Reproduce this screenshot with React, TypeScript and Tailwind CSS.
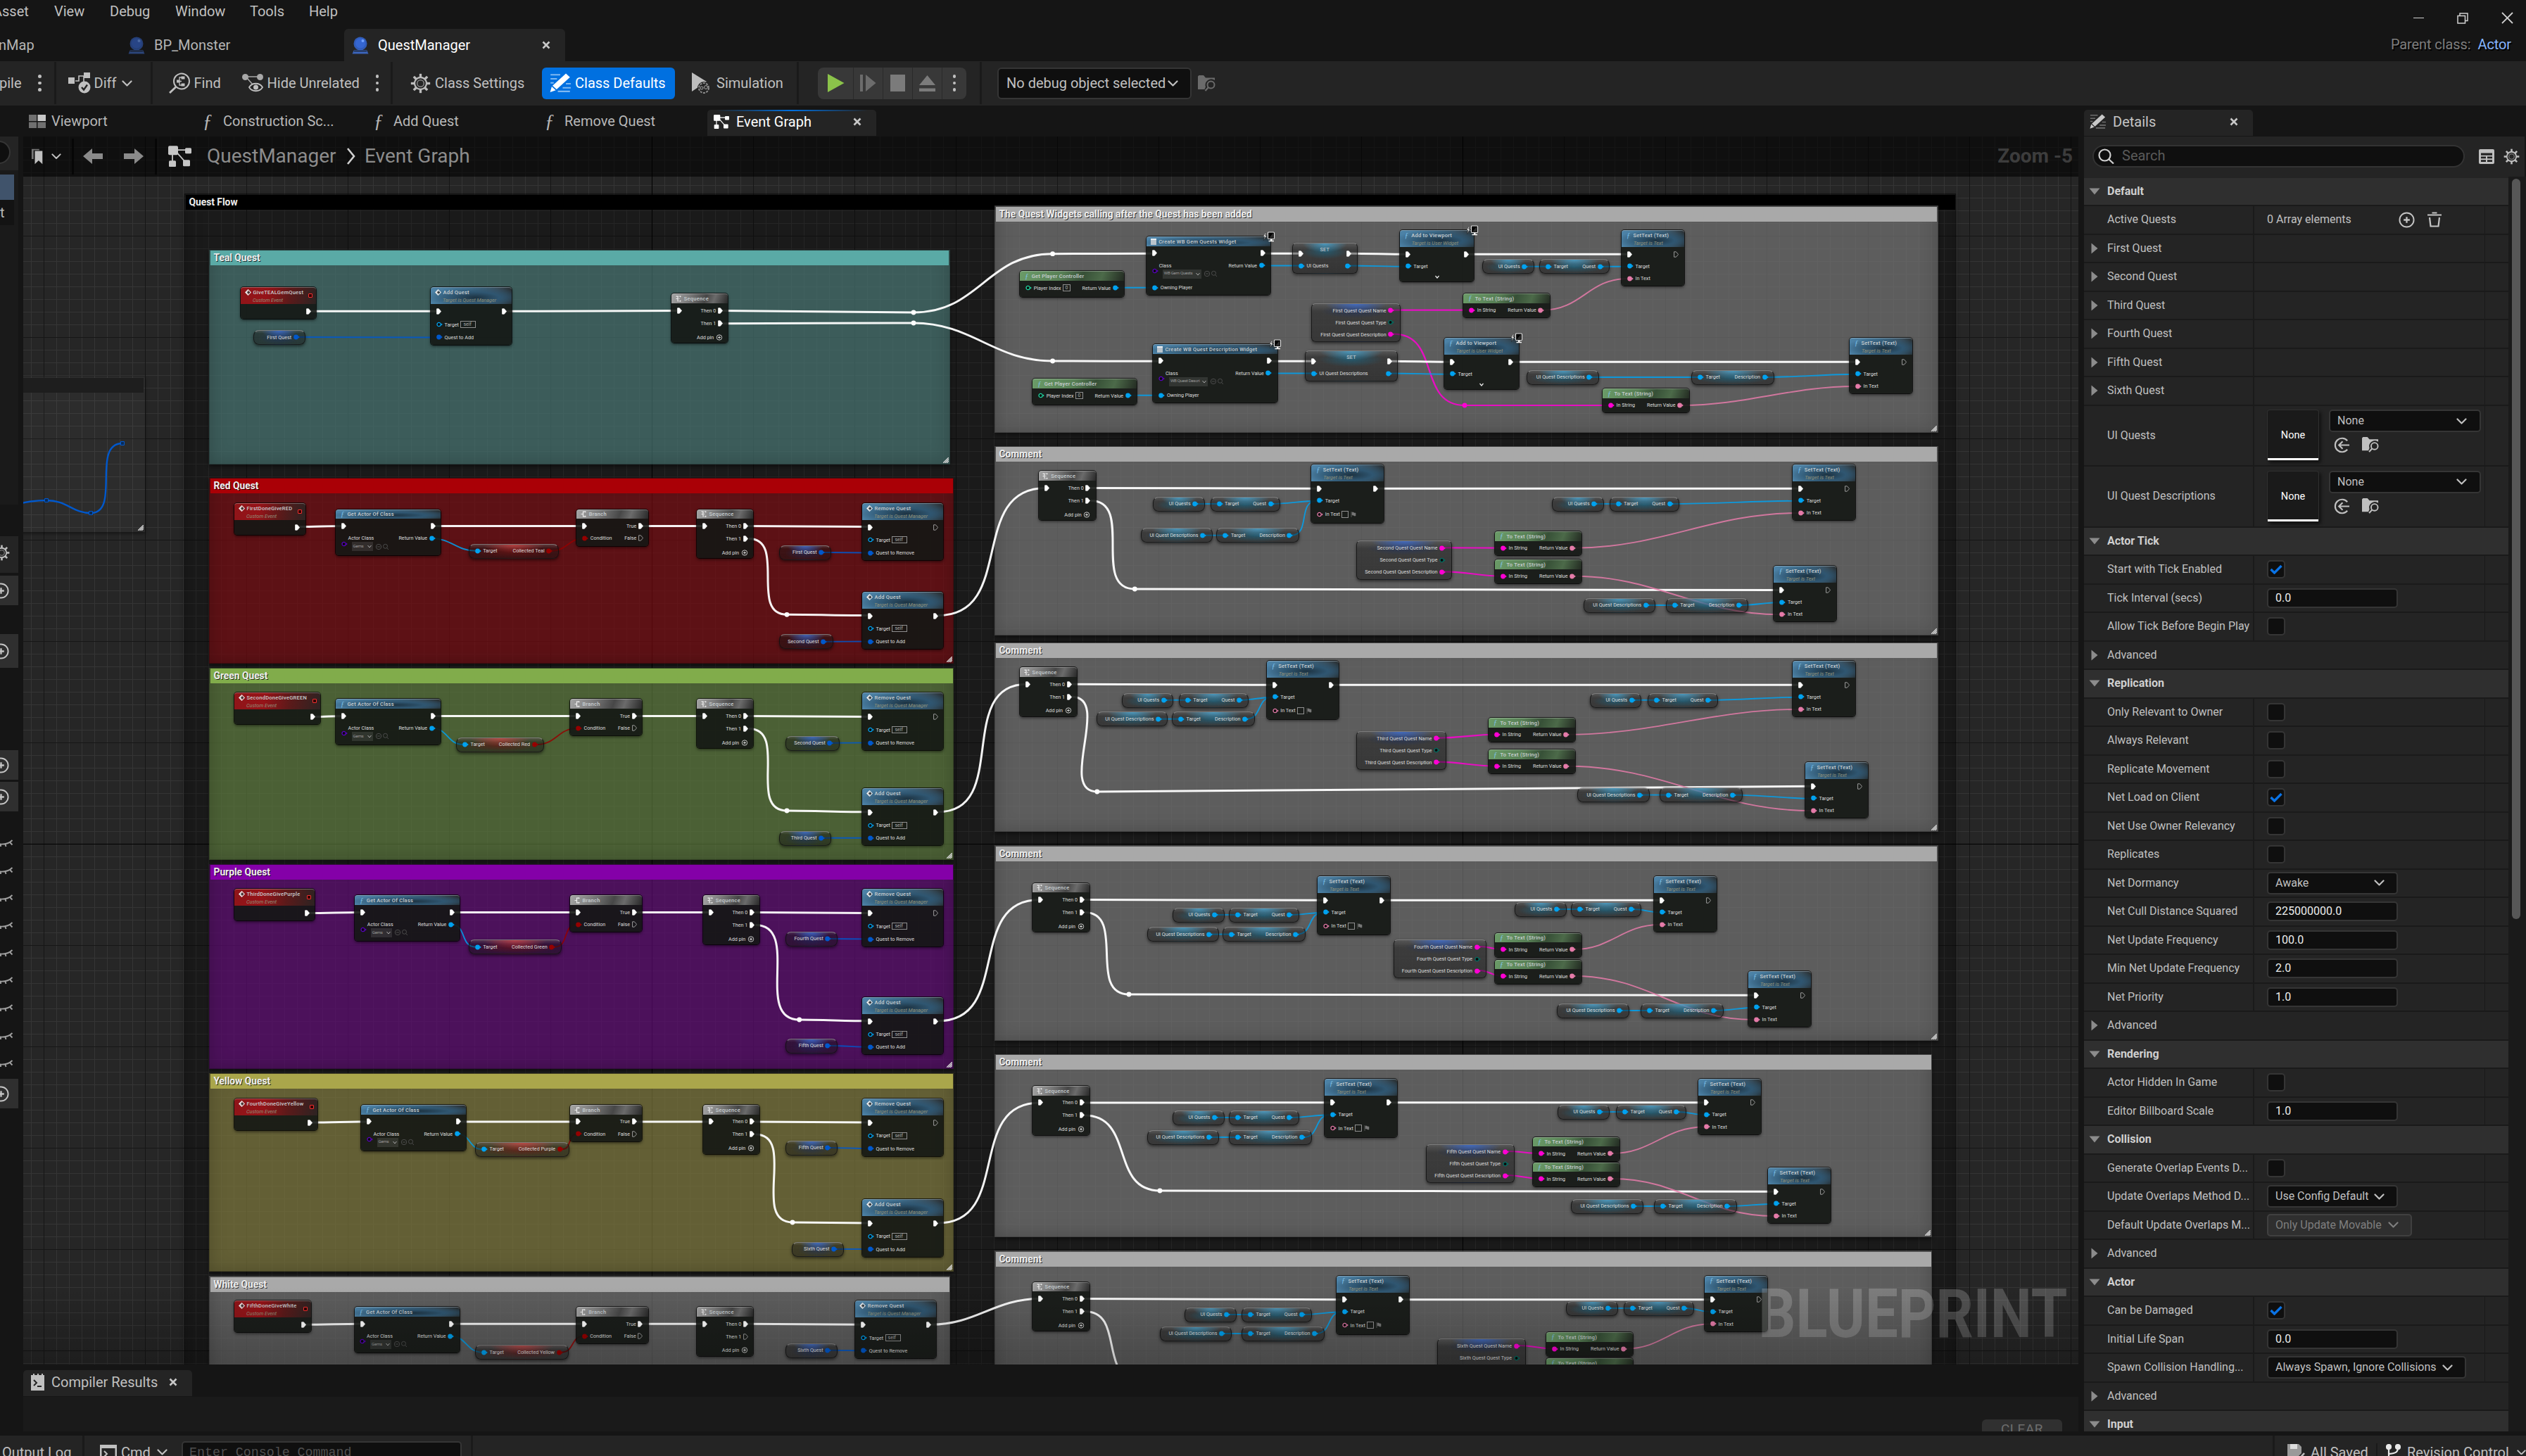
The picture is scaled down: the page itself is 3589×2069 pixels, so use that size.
import React from "react";

/* ------------------------------------------------------------------ */
/* Blueprint graph data                                                */
/* ------------------------------------------------------------------ */

type Kind = "exec" | "obj" | "struct" | "str" | "text" | "enum" | "bool" | "cls" | "int";
type Pin = { k?: Kind; t?: string; hollow?: boolean; box?: string; flag?: boolean; plus?: boolean };
type Row = { h?: number; l?: Pin; r?: Pin };
type Tone = "event" | "func" | "pure" | "flow";
type GNode = {
  x: number;
  y: number;
  w: number;
  h: number;
  tone?: Tone;
  icon?: "event" | "f" | "branch" | "seq" | "widget";
  title?: string;
  sub?: string;
  rows: Row[];
  pill?: "obj" | "struct" | "bool" | "set";
  latent?: boolean;
  expand?: boolean;
  pick?: { label: string; value: string; boxW: number };
};
type Wire = { a: [number, number]; b: [number, number]; k: Kind };

const COLORS: Record<Kind, string> = {
  exec: "#ffffff",
  obj: "#00a2f0",
  struct: "#0058cc",
  str: "#ff00d4",
  text: "#e57ba9",
  enum: "#006e62",
  bool: "#950000",
  cls: "#5a00c0",
  int: "#1fd6a0",
};

const nodes: GNode[] = [];
const wires: Wire[] = [];
const knots: { p: [number, number]; k: Kind }[] = [];
const link = (k: Kind, ...pts: [number, number][]) => {
  for (let i = 0; i < pts.length - 1; i++) wires.push({ a: pts[i], b: pts[i + 1], k });
  for (let i = 1; i < pts.length - 1; i++) knots.push({ p: pts[i], k });
};

const X: Pin = { k: "exec" };
const XH: Pin = { k: "exec", hollow: true };

function eventNode(x: number, y: number, w: number, title: string) {
  nodes.push({ x, y, w, h: 45, tone: "event", icon: "event", title, sub: "Custom Event", rows: [{ r: X, h: 18.3 }] });
}
function questNode(x: number, y: number, verb: "Add" | "Remove", open = false) {
  nodes.push({
    x, y, w: 115, h: 81.5, tone: "func", icon: "event", title: `${verb} Quest`, sub: "Target is Quest Manager",
    rows: [
      { h: 18.3, l: X, r: open ? XH : X },
      { h: 18.3, l: { k: "obj", hollow: true, t: "Target", box: "self" } },
      { h: 18.3, l: { k: "struct", t: `Quest to ${verb}` } },
    ],
  });
}
function seqNode(x: number, y: number, w = 80, last = true) {
  nodes.push({
    x, y, w, h: 69.5, tone: "flow", icon: "seq", title: "Sequence",
    rows: [
      { l: X, r: { k: "exec", t: "Then 0" } },
      { h: 18.6, r: { k: "exec", t: "Then 1", hollow: !last } },
      { h: 21, r: { t: "Add pin", plus: true } },
    ],
  });
}
function branchNode(x: number, y: number) {
  nodes.push({
    x, y, w: 102, h: 52, tone: "flow", icon: "branch", title: "Branch",
    rows: [
      { l: X, r: { k: "exec", t: "True" } },
      { l: { k: "bool", t: "Condition" }, r: { k: "exec", hollow: true, t: "False" } },
    ],
  });
}
function actorNode(x: number, y: number) {
  nodes.push({
    x, y, w: 149, h: 65, tone: "func", icon: "f", title: "Get Actor Of Class",
    rows: [{ l: X, r: X }, { l: { t: "Actor Class" }, r: { k: "obj", t: "Return Value" } }],
    pick: { label: "Actor Class", value: "Gems", boxW: 30 },
  });
}
function varNode(x: number, cy: number, w: number, t: string, pill: "obj" | "struct") {
  nodes.push({ x, y: cy - 10.3, w, h: 21, pill, rows: [{ h: 20.6, r: { k: pill, t } }] });
}
function getNode(x: number, cy: number, w: number, t: string, k: "obj" | "bool") {
  nodes.push({ x, y: cy - 10.3, w, h: 21, pill: k, rows: [{ h: 20.6, l: { k: "obj", t: "Target" }, r: { k, t } }] });
}
function setText(x: number, y: number, first = false) {
  nodes.push({
    x, y, w: first ? 102.5 : 88.5, h: first ? 83 : 79, tone: "func", icon: "f", title: "SetText (Text)", sub: "Target is Text",
    rows: [
      { l: X, r: first ? X : XH },
      { l: { k: "obj", t: "Target" } },
      first ? { h: 21.6, l: { k: "text", hollow: true, t: "In Text", box: " ", flag: true } } : { l: { k: "text", t: "In Text" } },
    ],
  });
}
function toText(x: number, y: number) {
  nodes.push({
    x, y, w: 122.6, h: 34, tone: "pure", icon: "f", title: "To Text (String)",
    rows: [{ h: 16.6, l: { k: "str", t: "In String" }, r: { k: "text", t: "Return Value" } }],
  });
}
function structNode(x: number, y: number, w: number, n: string) {
  nodes.push({
    x, y, w, h: 55.3, pill: "struct",
    rows: [
      { h: 17, r: { k: "str", t: `${n} Quest Quest Name` } },
      { h: 17, r: { k: "enum", hollow: true, t: `${n} Quest Quest Type` } },
      { h: 17, r: { k: "str", t: `${n} Quest Quest Description` } },
    ],
  });
}

type Quest = {
  y: number; ev: string; evW: number; ac: number; br: number; sq: number; rmX?: number;
  col: string; colX: number; colW: number; colY: number;
  v1: string; v1x: number; v1w: number; v1y: number;
  add?: number; v2?: string; v2x?: number; v2w?: number; v2y?: number; knot?: [number, number];
};
function quest(q: Quest) {
  const t = q.y + 9;
  const rm = q.rmX ?? 1225;
  link("exec", [333 + q.evW - 8, q.y + 34], [q.ac + 10, t + 24]);
  link("exec", [q.ac + 141, t + 24], [q.br + 10, t + 24]);
  link("exec", [q.br + 94, t + 24], [q.sq + 10, t + 24]);
  link("exec", [q.sq + 72, t + 24], [rm + 10, q.y + 34]);
  link("obj", [q.ac + 137, t + 41.5], [q.colX + 10, q.colY]);
  link("bool", [q.colX + q.colW - 10, q.colY], [q.br + 10, t + 41.5]);
  link("struct", [q.v1x + q.v1w - 10, q.v1y], [rm + 10, q.y + 71]);
  eventNode(333, q.y, q.evW, q.ev);
  actorNode(q.ac, t);
  branchNode(q.br, t);
  getNode(q.colX, q.colY, q.colW, q.col, "bool");
  seqNode(q.sq, t, 80, q.add !== undefined);
  varNode(q.v1x, q.v1y, q.v1w, q.v1, "struct");
  questNode(rm, q.y, "Remove", q.add !== undefined);
  if (q.add !== undefined && q.knot && q.v2) {
    link("exec", [q.sq + 74, t + 42], q.knot, [1235, q.add + 34]);
    link("struct", [q.v2x! + q.v2w! - 10, q.v2y!], [1235, q.add + 71]);
    questNode(1225, q.add, "Add");
    varNode(q.v2x!, q.v2y!, q.v2w!, q.v2, "struct");
  }
}

type Ui = {
  n: string; from: [number, number]; seq: [number, number]; a: [number, number]; b: [number, number];
  uq: number; tq: number; y1: number; ud: number; td: number; y2: number;
  ruq: number; rtq: number; ry: number; st: [number, number, number]; tt: [number, number, number];
  c?: [number, number]; rd?: number; rtd?: number; rdy?: number; knot: [number, number];
};
function ui(u: Ui) {
  const [sx, sy] = u.seq;
  link("exec", u.from, [sx + 10, sy + 24]);
  link("exec", [sx + 73, sy + 24], [u.a[0] + 10, u.a[1] + 34.3]);
  link("exec", [u.a[0] + 94, u.a[1] + 34.3], [u.b[0] + 10, u.b[1] + 34.3]);
  link("obj", [u.uq + 64, u.y1], [u.tq + 10, u.y1]);
  link("obj", [u.tq + 88, u.y1], [u.a[0] + 8, u.a[1] + 51.7]);
  link("obj", [u.ud + 90, u.y2], [u.td + 10, u.y2]);
  link("obj", [u.td + 106, u.y2], [u.a[0] + 8, u.a[1] + 51.7]);
  link("obj", [u.ruq + 64, u.ry], [u.rtq + 10, u.ry]);
  link("obj", [u.rtq + 88, u.ry], [u.b[0] + 10, u.b[1] + 51.7]);
  const r = u.st[0] + u.st[2] - 10;
  link("str", [r, u.st[1] + 10], [u.tt[0] + 10, u.tt[1] + 23.5]);
  link("str", [r, u.st[1] + 44], [u.tt[0] + 10, u.tt[2] + 23.5]);
  link("text", [u.tt[0] + 113, u.tt[1] + 23.5], [u.b[0] + 8, u.b[1] + 69]);
  seqNode(sx, sy, 81);
  varNode(u.uq, u.y1, 73.5, "UI Quests", "obj");
  getNode(u.tq, u.y1, 99.5, "Quest", "obj");
  varNode(u.ud, u.y2, 101.5, "UI Quest Descriptions", "obj");
  getNode(u.td, u.y2, 117.5, "Description", "obj");
  setText(u.a[0], u.a[1], true);
  varNode(u.ruq, u.ry, 73.5, "UI Quests", "obj");
  getNode(u.rtq, u.ry, 99.5, "Quest", "obj");
  setText(u.b[0], u.b[1]);
  structNode(u.st[0], u.st[1], u.st[2], u.n);
  toText(u.tt[0], u.tt[1]);
  toText(u.tt[0], u.tt[2]);
  if (u.c) {
    link("exec", [sx + 74, sy + 42], u.knot, [u.c[0] + 10, u.c[1] + 34.3]);
    link("text", [u.tt[0] + 113, u.tt[2] + 23.5], [u.c[0] + 8, u.c[1] + 69]);
    link("obj", [u.rd! + 92, u.rdy!], [u.rtd! + 10, u.rdy!]);
    link("obj", [u.rtd! + 106, u.rdy!], [u.c[0] + 10, u.c[1] + 51.7]);
    varNode(u.rd!, u.rdy!, 102.5, "UI Quest Descriptions", "obj");
    getNode(u.rtd!, u.rdy!, 117.5, "Description", "obj");
    setText(u.c[0], u.c[1]);
  } else {
    link("exec", [sx + 74, sy + 42], u.knot);
  }
}

/* Opening quest */
link("exec", [441, 442.3], [622, 442.3]);
link("exec", [719, 442.3], [964, 441.5]);
link("struct", [424, 479], [622, 479.5]);
link("exec", [1027, 441.5], [1298, 444], [1495.6, 360.7], [1640, 360.3]);
link("exec", [1027, 459.7], [1298, 459], [1495.6, 513], [1648, 513.3]);
eventNode(342, 408.3, 107, "GiveTEALGemQuest");
questNode(612, 408.3, "Add");
varNode(360, 479.5, 74, "First Quest", "struct");
seqNode(954.3, 417.4);

/* Widget creation */
function widgetRow(gx: number, gy: number, cx: number, cy: number, cw: number, name: string, val: string, sx: number, sw: number, prop: string, vx: number) {
  link("obj", [gx + 138, gy + 23.4], [cx + 10, cy + 72.7]);
  link("exec", [cx + cw - 10, cy + 24.3], [sx + 10, cy + 24.3]);
  link("obj", [cx + cw - 10, cy + 41.5], [sx + 10, cy + 41.5]);
  link("exec", [sx + sw - 10, cy + 24.3], [vx + 10, cy + 25.3]);
  link("obj", [sx + sw - 12, cy + 41.5], [vx + 10, cy + 42.7]);
  nodes.push({
    x: gx, y: gy, w: 148, h: 36.6, tone: "pure", icon: "f", title: "Get Player Controller",
    rows: [{ h: 18, l: { k: "int", hollow: true, t: "Player Index", box: "0" }, r: { k: "obj", t: "Return Value" } }],
  });
  nodes.push({
    x: cx, y: cy, w: cw, h: 83, tone: "func", icon: "widget", title: name, latent: true,
    rows: [{ l: X, r: X }, { l: { t: "Class" }, r: { k: "obj", t: "Return Value" } }, { h: 17.3, l: { k: "obj", t: "Owning Player" } }],
    pick: { label: "Class", value: val, boxW: 55 },
  });
  nodes.push({
    x: sx, y: cy + 9.3, w: sw, h: 43.6, pill: "set",
    rows: [{ l: X, r: X }, { l: { k: "obj", t: prop }, r: { k: "obj" } }],
  });
  nodes.push({
    x: vx, y: cy - 9, w: 105.6, h: 72.7, tone: "func", icon: "f", title: "Add to Viewport", sub: "Target is User Widget", latent: true, expand: true,
    rows: [{ l: X, r: X }, { l: { k: "obj", t: "Target" } }],
  });
}
link("exec", [2085, 361.3], [2314, 361.3]);
link("obj", [2170, 378.7], [2198, 378.7]);
link("obj", [2276, 378.7], [2314, 378.7]);
link("text", [2192, 440.7], [2312, 396]);
link("str", [1980, 440.7], [2090, 440.7]);
link("str", [1980, 474.7], [2081, 576], [2288, 576]);
link("exec", [2148, 514.3], [2638, 514.3]);
link("obj", [2262, 536], [2414, 536]);
link("obj", [2510, 536], [2638, 531.7]);
link("text", [2389, 576], [2636, 549]);
widgetRow(1449.2, 385.3, 1629.2, 336, 176, "Create WB Gem Quests Widget", "WB Gem Quests", 1836, 92.7, "UI Quests", 1988.8);
widgetRow(1467.2, 538.3, 1638.4, 489, 176.5, "Create WB Quest Description Widget", "WB Quest Descri", 1854, 132, "UI Quest Descriptions", 2052);
varNode(2106, 378.7, 73.6, "UI Quests", "obj");
getNode(2187, 378.7, 100, "Quest", "obj");
setText(2304, 327);
toText(2079.3, 417);
structNode(1863.4, 430.7, 126.3, "First");
varNode(2169, 536, 102.8, "UI Quest Descriptions", "obj");
getNode(2403, 536, 118, "Description", "obj");
toText(2277, 552.3);
setText(2628, 480);

quest({ y: 714.5, ev: "FirstDoneGiveRED", evW: 100.5, ac: 477, br: 819.3, sq: 990, col: "Collected Teal", colX: 665.7, colW: 128, colY: 782.8, v1: "First Quest", v1x: 1107.2, v1w: 73.5, v1y: 785, add: 840.5, v2: "Second Quest", v2x: 1107.2, v2w: 76.5, v2y: 911.7, knot: [1118, 873.3] });
quest({ y: 984.4, ev: "SecondDoneGiveGREEN", evW: 122, ac: 477, br: 810, sq: 990, col: "Collected Red", colX: 648, colW: 125, colY: 1058, v1: "Second Quest", v1x: 1116.4, v1w: 76.5, v1y: 1055.8, add: 1119.8, v2: "Third Quest", v2x: 1107.2, v2w: 73.5, v2y: 1190.8, knot: [1118, 1152] });
quest({ y: 1263.4, ev: "ThirdDoneGivePurple", evW: 114, ac: 504.3, br: 810, sq: 999.3, col: "Collected Green", colX: 665.7, colW: 132, colY: 1345.7, v1: "Fourth Quest", v1x: 1116.4, v1w: 73.5, v1y: 1334, add: 1416.8, v2: "Fifth Quest", v2x: 1116.4, v2w: 73.5, v2y: 1486, knot: [1135.7, 1449] });
quest({ y: 1561, ev: "FourthDoneGiveYellow", evW: 118, ac: 513, br: 810, sq: 999.3, col: "Collected Purple", colX: 675, colW: 134, colY: 1633, v1: "Fifth Quest", v1x: 1116.4, v1w: 73.5, v1y: 1631, add: 1704, v2: "Sixth Quest", v2x: 1125, v2w: 73.5, v2y: 1775, knot: [1126, 1737] });
quest({ y: 1848.3, ev: "FifthDoneGiveWhite", evW: 109, ac: 503.6, br: 818.8, sq: 990.2, rmX: 1215.2, col: "Collected Yellow", colX: 675, colW: 133, colY: 1921.6, v1: "Sixth Quest", v1x: 1116.2, v1w: 73.5, v1y: 1918.8 });

ui({ n: "Second", from: [1333, 874.5], seq: [1475.7, 669.4], a: [1863.2, 660], b: [2547.2, 660], uq: 1638.2, tq: 1719.5, y1: 716, ud: 1621, td: 1728.4, y2: 760.7, ruq: 2205.2, rtq: 2286.5, ry: 716, st: [1926.6, 768.3, 136], tt: [2124, 755.2, 795.2], c: [2520.4, 804.3], rd: 2249.8, rtd: 2366.8, rdy: 860, knot: [1612.3, 837] });
ui({ n: "Third", from: [1333, 1153.8], seq: [1449, 948.2], a: [1799.8, 939], b: [2547.2, 939], uq: 1593.6, tq: 1674.8, y1: 994.8, ud: 1557.9, td: 1665, y2: 1021.7, ruq: 2258.8, rtq: 2341, ry: 994.8, st: [1926.6, 1038.7, 128], tt: [2115, 1020.2, 1065.3], c: [2565, 1083], rd: 2241, rtd: 2358, rdy: 1129.6, knot: [1558.8, 1125] });
ui({ n: "Fourth", from: [1333, 1450.8], seq: [1467, 1254.5], a: [1872, 1245], b: [2350, 1245], uq: 1666, tq: 1746, y1: 1300, ud: 1630, td: 1737, y2: 1327.6, ruq: 2152, rtq: 2232, ry: 1292, st: [1980, 1335, 132], tt: [2124, 1325.5, 1363.5], c: [2484, 1380], rd: 2212, rtd: 2331, rdy: 1436, knot: [1604, 1413] });
ui({ n: "Fifth", from: [1333, 1738], seq: [1467, 1543], a: [1882, 1532.5], b: [2413, 1532.5], uq: 1666, tq: 1746, y1: 1588, ud: 1630, td: 1746, y2: 1616, ruq: 2213, rtq: 2296, ry: 1580, st: [2026, 1626, 126], tt: [2178, 1615.5, 1651.5], c: [2512, 1659], rd: 2232, rtd: 2350, rdy: 1714, knot: [1648, 1692] });
ui({ n: "Sixth", from: [1323, 1882.3], seq: [1467, 1821.5], a: [1899, 1812.5], b: [2422, 1812.5], uq: 1683, tq: 1764, y1: 1868, ud: 1648, td: 1764, y2: 1895, ruq: 2225, rtq: 2307, ry: 1859, st: [2042, 1902, 126], tt: [2197, 1893, 1930], knot: [1618, 1960] });

type Cm = { x: number; y: number; r: number; b: number; t: string; head: string; body: string };
const comments: Cm[] = [
  { x: 262, y: 275, r: 2779, b: 2100, t: "Quest Flow", head: "bg-black", body: "bg-black/30" },
  { x: 297, y: 354.500, r: 1349.5, b: 660, t: "Teal Quest", head: "bg-[#5aaaa6]", body: "bg-[rgba(84,137,134,0.6)]" },
  { x: 297, y: 678.500, r: 1355, b: 943, t: "Red Quest", head: "bg-[#aa0006]", body: "bg-[rgba(139,12,19,0.6)]" },
  { x: 297, y: 948.500, r: 1355, b: 1222, t: "Green Quest", head: "bg-[#81ac4b]", body: "bg-[rgba(109,144,72,0.6)]" },
  { x: 297, y: 1227.500, r: 1355, b: 1519, t: "Purple Quest", head: "bg-[#8400a8]", body: "bg-[rgba(110,12,135,0.6)]" },
  { x: 297, y: 1524.500, r: 1355, b: 1807, t: "Yellow Quest", head: "bg-[#aaa64b]", body: "bg-[rgba(149,142,72,0.6)]" },
  { x: 297, y: 1813, r: 1350, b: 2100, t: "White Quest", head: "bg-[#a9a9a9]", body: "bg-[rgba(139,139,139,0.6)]" },
  { x: 1413, y: 292, r: 2753.5, b: 615, t: "The Quest Widgets calling after the Quest has been added", head: "bg-[#a9a9a9]", body: "bg-[rgba(139,139,139,0.6)]" },
  { x: 1413, y: 633.500, r: 2753.5, b: 903, t: "Comment", head: "bg-[#a9a9a9]", body: "bg-[rgba(139,139,139,0.6)]" },
  { x: 1413, y: 912.500, r: 2753.5, b: 1182, t: "Comment", head: "bg-[#a9a9a9]", body: "bg-[rgba(139,139,139,0.6)]" },
  { x: 1413, y: 1201, r: 2753.5, b: 1479, t: "Comment", head: "bg-[#a9a9a9]", body: "bg-[rgba(139,139,139,0.6)]" },
  { x: 1413, y: 1497.500, r: 2745, b: 1757.5, t: "Comment", head: "bg-[#a9a9a9]", body: "bg-[rgba(139,139,139,0.6)]" },
  { x: 1413, y: 1777, r: 2745, b: 2100, t: "Comment", head: "bg-[#a9a9a9]", body: "bg-[rgba(139,139,139,0.6)]" },
];

/* ------------------------------------------------------------------ */
/* Graph rendering                                                     */
/* ------------------------------------------------------------------ */

function PinShape({ p }: { p: Pin }) {
  if (p.plus)
    return (
      <svg width="10" height="9" viewBox="0 0 10 9" className="shrink-0">
        <circle cx="5" cy="4.5" r="3.7" fill="none" stroke="#ddd" strokeWidth="0.9" />
        <path d="M5 2.6v3.8M3.1 4.5h3.8" stroke="#ddd" strokeWidth="1" />
      </svg>
    );
  if (!p.k) return <span className="w-[7px] shrink-0" />;
  const c = COLORS[p.k];
  if (p.k === "exec")
    return (
      <svg width="7" height="9" viewBox="0 0 7 9" className="shrink-0">
        <path d="M0.6 0.8h2.8L6.6 4.5 3.4 8.2H0.6z" fill={p.hollow ? "none" : c} stroke={p.hollow ? "#bbb" : c} strokeWidth="0.8" strokeLinejoin="round" />
      </svg>
    );
  return (
    <svg width="9" height="8" viewBox="0 0 9 8" className="shrink-0">
      <circle cx="3.6" cy="4" r={p.hollow ? 2.6 : 3.4} fill={p.hollow ? "#0a0a0a" : c} stroke={c} strokeWidth={p.hollow ? 1.3 : 0} />
      <path d="M7 2.6L8.8 4 7 5.4z" fill={c} />
    </svg>
  );
}

function PinView({ p, side }: { p: Pin; side: "l" | "r" }) {
  const label = p.t ? <span className="text-[7.2px] leading-[9px] text-[#dedede] whitespace-pre">{p.t}</span> : null;
  return side === "l" ? (
    <div className="flex items-center gap-[2.5px]">
      <PinShape p={p} />
      {label}
      {p.box && (
        <span className={`border border-[#8f8f8f] text-[7px] leading-[8px] text-[#aaa] h-[10px] ${p.box === "self" ? "w-[22px] pl-[3px]" : p.box === "0" ? "w-[11px] pl-[2.5px]" : "w-[10px]"}`}>{p.box}</span>
      )}
      {p.flag && (
        <svg width="8" height="8" viewBox="0 0 8 8">
          <path d="M1 0v8M2 1h2l1 1h2v4H5L4 5H2z" fill="#777" stroke="#777" strokeWidth="0.6" />
        </svg>
      )}
    </div>
  ) : (
    <div className="flex items-center gap-[2.5px] ml-auto">
      {label}
      <PinShape p={p} />
    </div>
  );
}

function NodeIcon({ icon }: { icon: GNode["icon"] }) {
  if (icon === "f")
    return <span className="w-[8px] text-center font-[Liberation_Serif] italic text-[10px] leading-[10px] text-[#7fc2ea]">ƒ</span>;
  if (icon === "event")
    return (
      <svg width="9" height="9" viewBox="0 0 9 9" className="shrink-0">
        <path d="M4.5 0.7L8.3 4.5 4.5 8.3 0.7 4.5z" fill="none" stroke="#e8e8e8" strokeWidth="1.1" />
        <path d="M0.7 4.5L4.5 0.7v7.6z" fill="#e8e8e8" />
        <path d="M3.2 3.4h2v-1l2 2.1-2 2.1v-1h-2z" fill="#333" />
      </svg>
    );
  if (icon === "widget") return <span className="size-[8.5px] bg-[#b9c4cc] border-t-2 border-[#e8eef2] shrink-0" />;
  return (
    <svg width="9" height="9" viewBox="0 0 9 9" className="shrink-0">
      <path d={icon === "branch" ? "M0.5 4.5h3M6 1.2H3.5v6.6H6" : "M0.5 1.2h2.5M0.5 4.5H3M3 0.5v8M4.5 1.2h1M4.5 4.5h1M4.5 7.8h1"} stroke="#eee" strokeWidth="1.2" fill="none" />
      <path d="M6 0v2.6L8 1.3zM6 6.4V9l2-1.3z" fill="#eee" />
    </svg>
  );
}

const TONES: Record<Tone, string> = {
  event: "bg-[linear-gradient(100deg,#8f1519_0%,#961318_35%,#5b1a1a_65%,#2c2322_100%)]",
  func: "bg-[radial-gradient(ellipse_at_55%_60%,#1d3342_0%,#2f5671_38%,rgba(74,124,158,0)_80%),linear-gradient(100deg,#4d83a8_0%,#457696_45%,#3a4c58_80%,#252a2c_100%)]",
  pure: "bg-[linear-gradient(110deg,#6b9c68_0%,#577f55_40%,#375037_60%,#4c6a49_78%,#232b22_100%)]",
  flow: "bg-[linear-gradient(110deg,#a5a5a5_0%,#7d7d7d_30%,#474747_60%,#6b6b6b_75%,#282828_100%)]",
};
const PILLS: Record<string, string> = {
  obj: "bg-[radial-gradient(ellipse_35%_60%_at_50%_0%,rgba(70,175,225,0.75),transparent),radial-gradient(ellipse_45%_45%_at_50%_55%,rgba(20,110,145,0.55),transparent),linear-gradient(rgba(80,80,80,0.6),rgba(20,20,20,0.45)_30%,rgba(20,20,20,0.5))]",
  set: "bg-[radial-gradient(ellipse_35%_30%_at_50%_0%,rgba(70,175,225,0.75),transparent),radial-gradient(ellipse_35%_25%_at_50%_28%,rgba(20,110,145,0.55),transparent),linear-gradient(rgba(80,80,80,0.5),rgba(20,20,20,0.45)_20%,rgba(20,20,20,0.55))]",
  struct: "bg-[radial-gradient(ellipse_35%_12px_at_50%_0%,rgba(60,110,215,0.8),transparent),radial-gradient(ellipse_40%_10px_at_50%_10px,rgba(25,50,110,0.5),transparent),linear-gradient(rgba(80,80,80,0.5),rgba(20,20,20,0.45)_20%,rgba(20,20,20,0.5))]",
  bool: "bg-[radial-gradient(ellipse_35%_60%_at_50%_0%,rgba(215,70,70,0.75),transparent),radial-gradient(ellipse_45%_45%_at_50%_55%,rgba(120,20,20,0.55),transparent),linear-gradient(rgba(90,80,80,0.6),rgba(20,20,20,0.45)_30%,rgba(20,20,20,0.5))]",
};

function Rows({ n }: { n: GNode }) {
  return (
    <>
      {n.rows.map((r, i) => (
        <React.Fragment key={i}>
          <div className="flex items-center pl-[8px] pr-[7.5px]" style={{ height: r.h ?? 17.3 }}>
            {r.l && <PinView p={r.l} side="l" />}
            {r.r && <PinView p={r.r} side="r" />}
          </div>
          {n.pick && i === 1 && (
            <div className="flex items-center h-[13px] -mt-[3.3px] mb-[4.4px] pl-[7.5px]">
              <div className="-mt-[8px] w-[15px]">
                <PinShape p={{ k: "cls", hollow: true }} />
              </div>
              <div className="flex items-center justify-between h-[13px] bg-white/10 px-[2px] overflow-hidden" style={{ width: n.pick.boxW }}>
                <span className="text-[6.2px] tracking-[-0.3px] text-[#9a9a9a] whitespace-nowrap">{n.pick.value}</span>
                <svg className="shrink-0" width="6" height="5" viewBox="0 0 6 5"><path d="M0.5 1L3 4 5.5 1" stroke="#aaa" fill="none" /></svg>
              </div>
              <svg width="20" height="10" viewBox="0 0 20 10" className="ml-[3px]" fill="none" stroke="#4c4c4c" strokeWidth="1">
                <circle cx="5" cy="5" r="3.7" /><path d="M3 5h4" /><circle cx="14.5" cy="4.3" r="3" /><path d="M16.6 6.5L19 9" />
              </svg>
            </div>
          )}
        </React.Fragment>
      ))}
    </>
  );
}

function NodeView({ n }: { n: GNode }) {
  const place = { left: n.x, top: n.y, width: n.w, height: n.h };
  if (n.pill) {
    const tall = n.rows.length > 1;
    return (
      <div className={`absolute ${tall ? "rounded-[6px]" : "rounded-[8px]"} border border-[#111]/80 border-t-[#9a9a9a]/70 shadow-[0_2px_4px_rgba(0,0,0,0.55)] ${PILLS[n.pill]}`} style={place}>
        {n.pill === "set" && <div className="h-[5.6px] pt-[3.6px] text-center text-[7.4px] leading-[9px] tracking-[0.2px] text-[#cfd4d8]">SET</div>}
        <div className={n.pill === "set" ? "" : tall ? "pt-[1px]" : "-mt-[1px]"}>
          <Rows n={n} />
        </div>
      </div>
    );
  }
  return (
    <div className="absolute rounded-[4px] bg-[#141714]/90 shadow-[0_2px_4px_rgba(0,0,0,0.6),0_0_0_1px_rgba(0,0,0,0.7)]" style={place}>
      <div className={`rounded-t-[4px] border-t border-white/30 ${TONES[n.tone!]} ${n.sub ? "h-[24px]" : "h-[13.6px]"}`}>
        <div className={`flex gap-[3px] pl-[5.5px] ${n.sub ? "h-[13px]" : "h-[12.6px]"} items-center`}>
          <NodeIcon icon={n.icon} />
          <span className="text-[7.5px] leading-[9px] font-medium tracking-[0.25px] text-[#c9cfd2] whitespace-nowrap">{n.title}</span>
        </div>
        {n.sub && <div className="pl-[17px] text-[7.2px] leading-[9px] italic text-[#90917a] whitespace-nowrap">{n.sub}</div>}
      </div>
      {n.tone === "event" && <div className="absolute right-[5px] top-[9px] w-[6px] h-[6px] rounded-[1px] border-[1.5px] border-[#f03030] bg-[#300]" />}
      {n.latent && (
        <svg className="absolute -right-[6.5px] -top-[7px]" width="18" height="15" viewBox="0 0 18 15">
          <rect x="7.5" y="1" width="9" height="9.5" rx="1" fill="#000" stroke="#ddd" strokeWidth="1.2" />
          <path d="M9 9.500L15 2v7.500z" fill="#2c2c2c" />
          <path d="M11 11h2.500v1.800h2.500v1.500H8.500v-1.500H11z" fill="#f2f2f2" />
          <path d="M4 1.500L1 7h2L1.500 12.500 5.500 5.500H3.500L5 1.500z" fill="#fff" stroke="#000" strokeWidth="0.4" />
        </svg>
      )}
      <div className={n.title === "Get Player Controller" ? "pt-[1.6px]" : n.sub ? "pt-[1.4px]" : "pt-[1.7px]"}>
        <Rows n={n} />
      </div>
      {n.expand && (
        <svg className="mx-auto mt-[4px]" width="6" height="5" viewBox="0 0 6 5"><path d="M0.5 1L3 4 5.5 1" stroke="#eee" strokeWidth="1.2" fill="none" /></svg>
      )}
    </div>
  );
}

function Grip({ c = "#d8d8d8" }: { c?: string }) {
  return (
    <svg className="absolute right-[2px] bottom-[2px]" width="8" height="8" viewBox="0 0 8 8">
      <path d="M0 8L8 0M2.5 8L8 2.5M5 8L8 5" stroke={c} strokeWidth="1.3" />
    </svg>
  );
}

function CommentBox({ c }: { c: Cm }) {
  return (
    <div className={`absolute p-[1.5px] shadow-[0_3px_6px_rgba(0,0,0,0.45),inset_0_0_0_1px_rgba(0,0,0,0.2),inset_0_0_26px_rgba(0,0,0,0.22)] ${c.body}`} style={{ left: c.x, top: c.y, width: c.r - c.x, height: c.b - c.y }}>
      <div className={`h-[21px] pl-[5px] text-[13.8px] leading-[21px] font-bold text-[#eeeeee] whitespace-nowrap [text-shadow:1px_1px_0_rgba(0,0,0,0.75)] ${c.head}`}>{c.t}</div>
      <Grip />
    </div>
  );
}

function wirePath(w: Wire) {
  const dx = w.b[0] - w.a[0];
  const dy = w.b[1] - w.a[1];
  const k = (Math.abs(dx) + Math.abs(dy)) / 3;
  return `M${w.a[0]} ${w.a[1]}C${w.a[0] + k} ${w.a[1]} ${w.b[0] - k} ${w.b[1]} ${w.b[0]} ${w.b[1]}`;
}

function Graph() {
  return (
    <div className="relative h-[1745px] w-full overflow-hidden bg-[#262626]">
      <div className="absolute left-[-33px] top-[-194px] w-[3589px] h-[2069px]">
        <svg className="absolute inset-0" width="3589" height="2069">
          <defs>
            <pattern id="minor" x="8" y="11" width="18" height="18" patternUnits="userSpaceOnUse">
              <path d="M0.5 0v18M0 0.5h18" stroke="#353535" />
            </pattern>
            <pattern id="major" x="62" y="47" width="144" height="144" patternUnits="userSpaceOnUse">
              <path d="M0.5 0v144M0 0.5h144" stroke="#161616" />
            </pattern>
          </defs>
          <rect width="3589" height="2069" fill="url(#minor)" />
          <rect width="3589" height="2069" fill="url(#major)" />
          <path d="M926.5 0v2069M2078.5 0v2069M0 1199.5h3589" stroke="#000" />
        </svg>
        <div className="absolute left-0 top-[535px] w-[206px] h-[221px] bg-white/[0.03] shadow-[0_2px_5px_rgba(0,0,0,0.5)] pt-[2px] pr-[2px]">
          <div className="h-[21px] bg-[#1e1e1e]" />
          <Grip />
        </div>
        {comments.map((c, i) => (
          <CommentBox key={i} c={c} />
        ))}
        <svg className="absolute inset-0" width="3589" height="2069" fill="none">
          <path d="M20 717C40 713 50 711 66 711C95 711 103 729 129 729C172 729 129 630 174 630" stroke="#0058cc" strokeWidth="2.4" />
          <path d="M63.500 708.500h5v5h-5zM126.500 726.500h5v5h-5zM171.500 627.500h5v5h-5z" fill="#0a2a55" stroke="#0058cc" />
          {wires.map((w, i) => (
            <path key={i} d={wirePath(w)} stroke={COLORS[w.k]} strokeWidth={w.k === "exec" ? 3 : w.k === "str" ? 2.2 : 1.9} strokeOpacity={w.k === "exec" ? 0.95 : 0.85} />
          ))}
          {knots.map((k, i) => (
            <circle key={i} cx={k.p[0]} cy={k.p[1]} r="3.4" fill={COLORS[k.k]} />
          ))}
        </svg>
        {nodes.map((n, i) => (
          <NodeView key={i} n={n} />
        ))}
      </div>
      <div className="absolute right-[16px] bottom-[24px] origin-right scale-x-[0.867] text-[96px] leading-[96px] font-bold text-white/20">BLUEPRINT</div>
      <div className="absolute inset-x-0 bottom-0 h-[110px] bg-[linear-gradient(transparent,rgba(0,0,0,0.22))]" />
      <div className="absolute inset-x-0 top-0 h-[57px] pb-[1px] bg-black/60 flex items-center text-[#c0c0c0]">
        <svg className="ml-[12px]" width="18" height="25" viewBox="0 0 20 26">
          <path d="M0 1h12v2H3v14H0z" fill="#777" />
          <path d="M5 4h12v21l-6-6-6 6z" fill="#c0c0c0" />
        </svg>
        <Chevron className="ml-[10px]" s={14} />
        <span className="ml-[15px] w-[3px] h-[51px] bg-black/60" />
        <svg className="ml-[13px]" width="28" height="24" viewBox="0 0 28 24" fill="#8a8a8a"><path d="M13 1v7h15v8H13v7L0 12z" /></svg>
        <svg className="ml-[30px]" width="28" height="24" viewBox="0 0 28 24" fill="#8a8a8a"><path d="M15 1v7H0v8h15v7l13-11z" /></svg>
        <span className="ml-[16px] w-[3px] h-[51px] bg-black/60" />
        <GraphIcon className="ml-[16px]" s={33} />
        <span className="ml-[22px] w-[198px] text-[28px] text-[#8c8c8c]">QuestManager</span>
        <svg width="13" height="24" viewBox="0 0 13 24"><path d="M2 1l9 11-9 11" stroke="#d0d0d0" strokeWidth="2.6" fill="none" /></svg>
        <span className="ml-[13px] text-[28px] text-[#8c8c8c]">Event Graph</span>
        <span className="ml-auto mr-[8px] text-[28px] font-bold text-white/20">Zoom -5</span>
      </div>
    </div>
  );
}

/* ------------------------------------------------------------------ */
/* Editor icons                                                        */
/* ------------------------------------------------------------------ */

type IconProps = { className?: string; s?: number };

function Chevron({ className = "", s = 16 }: IconProps) {
  return (
    <svg className={`shrink-0 ${className}`} width={s} height={s * 0.6} viewBox="0 0 15 9" fill="none">
      <path d="M1.500 1.500l6 6 6-6" stroke="currentColor" strokeWidth="2.2" strokeLinecap="round" strokeLinejoin="round" />
    </svg>
  );
}
function Close({ className = "" }: IconProps) {
  return (
    <svg className={`shrink-0 ${className}`} width="12" height="12" viewBox="0 0 12 12">
      <path d="M1.500 1.500l9 9M10.500 1.500l-9 9" stroke="#c8c8c8" strokeWidth="2.6" />
    </svg>
  );
}
function GraphIcon({ className = "", s = 24, c = "#c6c6c6" }: IconProps & { c?: string }) {
  return (
    <svg className={`shrink-0 ${className}`} width={s} height={s * 0.92} viewBox="0 0 33 30">
      <path d="M8 6h20M11 8l14 16M6 8v16" stroke={c} strokeWidth="1.800" fill="none" />
      <rect x="0" y="0" width="14" height="13" rx="2" fill={c} />
      <rect x="24" y="3" width="9" height="8" rx="1.500" fill={c} />
      <rect x="1" y="21" width="10" height="9" rx="1.500" fill={c} />
      <rect x="21" y="20" width="10" height="9" rx="1.500" fill={c} />
    </svg>
  );
}
function Gear({ className = "", s = 29 }: IconProps) {
  return (
    <svg className={`shrink-0 ${className}`} width={s} height={s} viewBox="0 0 28 28" fill="none" stroke="#bdbdbd">
      {[0, 45, 90, 135, 180, 225, 270, 315].map((a) => (
        <path key={a} d="M14 0.800v5" strokeWidth="3.200" transform={`rotate(${a} 14 14)`} />
      ))}
      <circle cx="14" cy="14" r="8.200" strokeWidth="2.200" />
      <circle cx="14" cy="14" r="4.600" strokeWidth="1.400" stroke="#8a8a8a" />
    </svg>
  );
}
function Pencil({ s = 24, c = "#c8c8c8", dim = "#6d6d6d" }: IconProps & { c?: string; dim?: string }) {
  return (
    <svg width={s} height={s * 0.92} viewBox="0 0 26 24" className="shrink-0">
      <path d="M1 2h12M1 7h8M1 12h4M20 13h6M16 18h10M10 22.500h15" stroke={dim} strokeWidth="1.800" />
      <path d="M20 0.500l5 4.500L8.500 20 3.500 15.500zM2.500 16.500l5 4.500L0.500 23.500z" fill={c} />
    </svg>
  );
}
function Orb({ dim = false }: { dim?: boolean }) {
  return (
    <svg width="24" height="25" viewBox="0 0 24 25" className={`shrink-0 ${dim ? "opacity-60" : ""}`}>
      <path d="M3 19h18l2.500 5.500H0.500z" fill="#3a62b5" />
      <path d="M3 20.500h18" stroke="#151515" strokeWidth="1.200" />
      <circle cx="12" cy="10" r="9.500" fill="#315cb8" />
      <circle cx="12" cy="9.500" r="7" fill="#3566d2" />
      <circle cx="15.500" cy="6" r="2" fill="#6fa0ff" />
    </svg>
  );
}
function Dots() {
  return (
    <span className="flex flex-col gap-[5px]">
      <i className="size-[4.500px] rounded-full bg-[#c0c0c0]" />
      <i className="size-[4.500px] rounded-full bg-[#c0c0c0]" />
      <i className="size-[4.500px] rounded-full bg-[#c0c0c0]" />
    </span>
  );
}
function FolderSearch({ c = "#c0c0c0", s = 25 }: IconProps & { c?: string }) {
  return (
    <svg width={s} height={s * 0.92} viewBox="0 0 25 23" className="shrink-0">
      <path d="M0 1.500L1.500 0H8l3 3.500h13V7a8.500 8.500 0 0 0-13 9.500L9.500 20H0z" fill={c} />
      <circle cx="18.500" cy="13.500" r="5" fill="none" stroke={c} strokeWidth="2" />
      <path d="M15 17l-4.500 5" stroke={c} strokeWidth="2.200" />
    </svg>
  );
}
function PlusCircle({ s = 23 }: IconProps) {
  return (
    <svg width={s} height={s} viewBox="0 0 24 24" fill="none" stroke="#c4c4c4" strokeWidth="2" className="shrink-0">
      <circle cx="12" cy="12" r="10.500" />
      <path d="M12 7.500v9M7.500 12h9" strokeWidth="2.400" />
    </svg>
  );
}

/* ------------------------------------------------------------------ */
/* Window chrome                                                       */
/* ------------------------------------------------------------------ */

function TitleBar() {
  return (
    <div className="h-[87px] flex">
      <div className="w-[1200px]">
        <div className="h-[41px] flex items-center pb-[9px] text-[20px] text-[#c0c0c0]">
          <span className="w-[87px] -ml-[10px]">Asset</span>
          <span className="w-[79px]">View</span>
          <span className="w-[93px]">Debug</span>
          <span className="w-[106px]">Window</span>
          <span className="w-[84px]">Tools</span>
          <span>Help</span>
        </div>
        <div className="h-[46px] flex items-center text-[20px] text-[#b5b5b5]">
          <span className="w-[184px] -ml-[2px]">nMap</span>
          <Orb dim />
          <span className="ml-[13px] w-[270px]">BP_Monster</span>
          <div className="w-[314px] h-[46px] rounded-t-[6px] bg-[#242424] flex items-center px-[11px] text-white">
            <Orb />
            <span className="ml-[13px]">QuestManager</span>
            <Close className="ml-auto mr-[10px]" />
          </div>
        </div>
      </div>
      <div className="ml-auto w-[300px] flex flex-col items-end">
        <div className="h-[51px] flex items-center gap-[47px] pr-[18px]">
          <span className="w-[15px] h-[1.500px] bg-[#d0d0d0]" />
          <svg width="16" height="16" viewBox="0 0 16 16" fill="none" stroke="#d0d0d0" strokeWidth="1.500"><path d="M1 4.500h10.500V15H1zM4 4.500V1h11v10.500h-3.500" /></svg>
          <svg width="17" height="17" viewBox="0 0 17 17" stroke="#d0d0d0" strokeWidth="1.800"><path d="M1 1l15 15M16 1L1 16" /></svg>
        </div>
        <div className="flex gap-[10px] pr-[21px] -mt-[3px] text-[20px] tracking-[-0.100px] text-[#7d7d7d] [text-shadow:1.500px_1.500px_0_#000]">
          <span>Parent class:</span>
          <span className="text-[#85b5ff]">Actor</span>
        </div>
      </div>
    </div>
  );
}

function Sep({ className = "" }: { className?: string }) {
  return <span className={`w-[3px] h-[60px] bg-[#1a1a1a] shrink-0 ${className}`} />;
}

function Toolbar() {
  return (
    <div className="h-[63px] pb-[1px] bg-[#242424] flex items-center text-[20px] text-[#c0c0c0] whitespace-nowrap">
      <span className="w-[55px] -ml-[1px]">pile</span>
      <Dots />
      <Sep className="ml-[18px]" />
      <svg className="ml-[17px]" width="32" height="30" viewBox="0 0 32 30" fill="none" stroke="#c0c0c0" strokeWidth="1.600">
        <path d="M10 12h5V5h7M22 5v9" />
        <path d="M0 7h9v9H0zM22 0h9v8h-9z" fill="#c0c0c0" stroke="none" />
        <circle cx="23" cy="21" r="8.500" fill="#c0c0c0" stroke="none" />
        <path d="M19 21l3 3.500 5-7" stroke="#242424" strokeWidth="2.400" />
      </svg>
      <span className="ml-[5px] w-[39px]">Diff</span>
      <Chevron s={15} />
      <Sep className="ml-[26px]" />
      <svg className="ml-[23px]" width="31" height="30" viewBox="0 0 31 30" fill="none" stroke="#c0c0c0" strokeWidth="2">
        <circle cx="18" cy="12.500" r="11" />
        <path d="M10 20.500L1 29" strokeWidth="2.800" />
        <path d="M18 7h-3v11h3M12 12.500h6" strokeWidth="1.300" />
        <path d="M17.500 5.500h5v4h-5zM17.500 15.500h5v4h-5zM11 10.500h4v4h-4z" fill="#c0c0c0" stroke="none" />
      </svg>
      <span className="ml-[5px] w-[68px]">Find</span>
      <svg width="31" height="27" viewBox="0 0 31 27" fill="none" stroke="#a8a8a8" strokeWidth="1.600">
        <path d="M5 4h20M7 6l8 9" />
        <circle cx="4.500" cy="4.500" r="4.500" fill="#a8a8a8" stroke="none" />
        <circle cx="25.500" cy="4.500" r="4.500" fill="#a8a8a8" stroke="none" />
        <path d="M10 19c4-7 15-7 19 0c-4 7-15 7-19 0z" stroke="#c0c0c0" strokeWidth="1.800" />
        <circle cx="19.500" cy="19" r="3.500" fill="#c0c0c0" stroke="none" />
      </svg>
      <span className="ml-[5px] w-[154px]">Hide Unrelated</span>
      <Dots />
      <Sep className="ml-[17px]" />
      <Gear className="ml-[25px]" />
      <span className="ml-[6px] w-[152px]">Class Settings</span>
      <div className="w-[189px] h-[45px] rounded-[6px] bg-[#0070e0] text-white flex items-center pl-[11px]">
        <Pencil s={30} c="#ffffff" dim="#7fb8f2" />
        <span className="ml-[6px]">Class Defaults</span>
      </div>
      <svg className="ml-[23px]" width="32" height="31" viewBox="0 0 32 31">
        <path d="M1 0l21 13-21 14z" fill="#bdbdbd" />
        <circle cx="18" cy="22" r="9" fill="#242424" />
        <circle cx="18" cy="22" r="7" fill="none" stroke="#8d8d8d" strokeWidth="2" strokeDasharray="3 1.500" />
        <circle cx="15" cy="22" r="2" fill="none" stroke="#aaa" />
        <circle cx="21" cy="21" r="2.400" fill="none" stroke="#aaa" />
      </svg>
      <span className="ml-[4px] w-[114px]">Simulation</span>
      <Sep />
      <div className="ml-[27px] w-[211px] h-[45px] rounded-[8px] bg-[#383838] flex items-center divide-x-[1.500px] divide-[#2a2a2a] overflow-hidden [&>*]:h-full [&>*]:flex [&>*]:items-center [&>*]:justify-center">
        <span className="w-[51px]"><svg width="25" height="26" viewBox="0 0 25 26"><path d="M1 0l23.500 13L1 26z" fill="#8bc34a" /></svg></span>
        <span className="w-[42px]"><svg width="23" height="24" viewBox="0 0 23 24" fill="#7b7b7b"><path d="M0 0h4v24H0zM8 0l14.500 12L8 24z" fill="#6c6c6c" /></svg></span>
        <span className="w-[42px]"><i className="block w-[21px] h-[24px] bg-[#7b7b7b]" /></span>
        <span className="w-[42px]"><svg width="23" height="23" viewBox="0 0 23 23" fill="#7b7b7b"><path d="M11.500 0L23 14H0zM0 18.500h23V23H0z" /></svg></span>
        <span className="flex-1"><Dots /></span>
      </div>
      <Sep className="ml-[19px]" />
      <div className="ml-[22px] w-[276px] h-[45px] rounded-[6px] bg-[#0f0f0f] border-2 border-[#353535] flex items-center pl-[11px]">
        <span className="w-[229px]">No debug object selected</span>
        <Chevron s={15} />
      </div>
      <span className="ml-[9px]"><FolderSearch c="#6b6b6b" /></span>
    </div>
  );
}

function FnIcon() {
  return <span className="w-[20px] font-[Liberation_Serif] italic text-[27px] leading-[24px] text-[#b8b8b8]">ƒ</span>;
}

function PanelTabs() {
  return (
    <div className="h-[44px] flex items-center text-[20px] text-[#b8b8b8] whitespace-nowrap">
      <svg className="ml-[8px]" width="24" height="19" viewBox="0 0 24 19">
        <path d="M0 0h11v9H0zM0 10.500h11V19H0zM12.500 10.500H24V19H12.500z" fill="#707070" />
        <path d="M12.500 0H24v9H12.500z" fill="#c8c8c8" />
      </svg>
      <span className="ml-[8px] w-[215px]">Viewport</span>
      <FnIcon />
      <span className="ml-[9px] w-[214px]">Construction Sc...</span>
      <FnIcon />
      <span className="ml-[8px] w-[215px]">Add Quest</span>
      <FnIcon />
      <span className="ml-[8px] w-[203px]">Remove Quest</span>
      <div className="w-[240px] h-[37px] mt-[5px] rounded-t-[5px] bg-[#242424] text-white flex items-center relative pl-[9px] pb-[3px] overflow-hidden">
        <span className="absolute inset-x-0 top-0 h-[2px] bg-[linear-gradient(90deg,transparent_5%,#0070e0_50%,transparent_95%)]" />
        <GraphIcon s={22} c="#ffffff" />
        <span className="ml-[10px]">Event Graph</span>
        <Close className="ml-auto mr-[21px]" />
      </div>
    </div>
  );
}

/* Strip of the My Blueprint panel that stays visible on the left edge */
function LeftStrip() {
  const eyes = [1197, 1236, 1275, 1314, 1353, 1392, 1431, 1471, 1510];
  const plus: [number, number][] = [[818, 42], [901, 48], [1066, 42], [1111, 42], [1533, 42]];
  return (
    <div className="w-[33px] h-full relative overflow-hidden bg-[#151515]">
      <div className="mt-[44px] w-[26px] h-[523px] bg-[#1a1a1a]">
        <div className="h-[48px] bg-[#242424] overflow-hidden">
          <div className="-ml-[20px] mt-[6px] w-[35px] h-[33px] rounded-r-full bg-[#0f0f0f] border-2 border-[#353535]" />
        </div>
        <div className="mt-[6px] w-[20px] h-[36px] bg-[#40536b]" />
        <div className="w-[20px] h-[36px] bg-[#131313] text-[20px] leading-[36px] text-[#b8b8b8] pl-0">t</div>
      </div>
      <div className="absolute left-0 top-[612px] w-[26px] h-[52px] bg-[#242424]"><div className="-ml-[9px] mt-[12px]"><Gear s={23} /></div></div>
      {plus.map(([y, h]) => (
        <div key={y} className="absolute left-0 w-[26px] bg-[#2f2f2f] flex items-center" style={{ top: y - 150, height: h }}>
          <div className="-ml-[10px]"><PlusCircle s={23} /></div>
        </div>
      ))}
      {eyes.map((y) => (
        <svg key={y} className="absolute left-0" style={{ top: y - 155 }} width="22" height="12" viewBox="0 0 22 12">
          <path d="M0 7.500C7 8 13 6.500 17.500 2M7.500 7.500l1 3.500M14 5l3.500 3.500M1 8v3" stroke="#a0a0a0" strokeWidth="1.900" fill="none" />
        </svg>
      ))}
    </div>
  );
}

function CompilerResults() {
  return (
    <div className="h-[95px] flex flex-col">
      <div className="mt-[8px] w-[240px] h-[37px] rounded-t-[5px] bg-[#242424] flex items-center text-[20px] text-[#c0c0c0] pl-[11px] pb-[3px]">
        <svg width="19" height="24" viewBox="0 0 19 24"><path d="M0 2h3V0h2v2h4V0h2v2h4V0h2v2h2v22H0z" fill="#c0c0c0" /><path d="M4 9l4 4-4 4M9 18h6" stroke="#242424" strokeWidth="2" fill="none" /></svg>
        <span className="ml-[10px] w-[163px]">Compiler Results</span>
        <Close className="ml-[4px]" />
      </div>
      <div className="mt-[1px] flex-1 bg-[#1a1a1a] overflow-hidden flex justify-end">
        <div className="mt-[32px] mr-[23px] w-[114px] h-[40px] rounded-[6px] bg-[#303030] text-center text-[19px] leading-[24px] text-[#6d6d6d] pt-[2px] tracking-[0.500px]">CLEAR</div>
      </div>
    </div>
  );
}

/* ------------------------------------------------------------------ */
/* Details panel                                                       */
/* ------------------------------------------------------------------ */

type Prop = { t: string; kind: "head" | "adv" | "open" | "array" | "class" | "check" | "num" | "combo" | "wide" | "off"; v?: string };
const props: Prop[] = [
  { t: "Default", kind: "head" },
  { t: "Active Quests", kind: "array", v: "0 Array elements" },
  ...["First", "Second", "Third", "Fourth", "Fifth", "Sixth"].map((n): Prop => ({ t: `${n} Quest`, kind: "open" })),
  { t: "UI Quests", kind: "class" },
  { t: "UI Quest Descriptions", kind: "class" },
  { t: "Actor Tick", kind: "head" },
  { t: "Start with Tick Enabled", kind: "check", v: "1" },
  { t: "Tick Interval (secs)", kind: "num", v: "0.0" },
  { t: "Allow Tick Before Begin Play", kind: "check" },
  { t: "Advanced", kind: "adv" },
  { t: "Replication", kind: "head" },
  { t: "Only Relevant to Owner", kind: "check" },
  { t: "Always Relevant", kind: "check" },
  { t: "Replicate Movement", kind: "check" },
  { t: "Net Load on Client", kind: "check", v: "1" },
  { t: "Net Use Owner Relevancy", kind: "check" },
  { t: "Replicates", kind: "check" },
  { t: "Net Dormancy", kind: "combo", v: "Awake" },
  { t: "Net Cull Distance Squared", kind: "num", v: "225000000.0" },
  { t: "Net Update Frequency", kind: "num", v: "100.0" },
  { t: "Min Net Update Frequency", kind: "num", v: "2.0" },
  { t: "Net Priority", kind: "num", v: "1.0" },
  { t: "Advanced", kind: "adv" },
  { t: "Rendering", kind: "head" },
  { t: "Actor Hidden In Game", kind: "check" },
  { t: "Editor Billboard Scale", kind: "num", v: "1.0" },
  { t: "Collision", kind: "head" },
  { t: "Generate Overlap Events D...", kind: "check" },
  { t: "Update Overlaps Method D...", kind: "combo", v: "Use Config Default" },
  { t: "Default Update Overlaps M...", kind: "off", v: "Only Update Movable" },
  { t: "Advanced", kind: "adv" },
  { t: "Actor", kind: "head" },
  { t: "Can be Damaged", kind: "check", v: "1" },
  { t: "Initial Life Span", kind: "num", v: "0.0" },
  { t: "Spawn Collision Handling...", kind: "wide", v: "Always Spawn, Ignore Collisions" },
  { t: "Advanced", kind: "adv" },
  { t: "Input", kind: "head" },
];

function Arrow({ open = false }: { open?: boolean }) {
  return (
    <span className="w-[33px] pl-[7px] shrink-0">
      {open ? (
        <svg width="16" height="10" viewBox="0 0 16 10"><path d="M0.500 0.500h15L8 9.500z" fill="#8c8c8c" /></svg>
      ) : (
        <svg className="ml-[3px]" width="10" height="16" viewBox="0 0 10 16"><path d="M0.500 0.500v15l9-7.500z" fill="#8c8c8c" /></svg>
      )}
    </span>
  );
}

function Value({ p }: { p: Prop }) {
  const box = "bg-[#0f0f0f] border-2 border-[#353535] rounded-[5px] flex items-center";
  switch (p.kind) {
    case "array":
      return (
        <>
          <span className="w-[187px]">{p.v}</span>
          <PlusCircle s={23} />
          <svg className="ml-[17px]" width="22" height="22" viewBox="0 0 22 22" fill="none" stroke="#c4c4c4" strokeWidth="2.200"><path d="M1 4.500h20M7.500 1.500h7M4 8l1.500 12.500h11L18 8" /></svg>
        </>
      );
    case "class":
      return (
        <>
          <div className="w-[74px] h-[73px] rounded-[4px] bg-[#1a1a1a] border border-[#303030] border-b-0 text-white text-[14.500px] text-center leading-[71px] shadow-[3px_3px_4px_rgba(0,0,0,0.5)] relative">
            None
            <span className="absolute inset-x-0 bottom-[1px] h-[3px] bg-white" />
          </div>
          <div className="ml-[14px] h-[73px] flex flex-col gap-[7px]">
            <div className={`w-[216px] h-[32px] ${box} pl-[10px] pr-[18px] justify-between`}>
              None
              <Chevron s={15} />
            </div>
            <div className="flex gap-[17px] pl-[7px]">
              <svg width="23" height="23" viewBox="0 0 24 24" fill="none" stroke="#c0c0c0" strokeWidth="2.200">
                <path d="M20 5.500a10.200 10.200 0 1 0 0 13M23 12H8M13 6.500L7.500 12l5.500 5.500" />
              </svg>
              <FolderSearch s={24} />
            </div>
          </div>
        </>
      );
    case "check":
      return (
        <div className={`size-[26px] ${box} justify-center`}>
          {p.v && <svg width="18" height="14" viewBox="0 0 18 14"><path d="M1.500 7l5 5L16.500 2" stroke="#0a73e6" strokeWidth="3.400" fill="none" /></svg>}
        </div>
      );
    case "num":
      return <div className={`w-[186px] h-[28px] ${box} pl-[10px] text-[#ececec]`}>{p.v}</div>;
    case "combo":
      return <div className={`w-[186px] h-[32px] ${box} pl-[10px] pr-[17px] justify-between`}>{p.v}<Chevron s={15} /></div>;
    case "wide":
      return <div className={`w-[283px] h-[32px] ${box} pl-[10px] pr-[17px] justify-between`}>{p.v}<Chevron s={15} /></div>;
    case "off":
      return <div className="w-[206px] h-[32px] bg-[#2f2f2f] border-2 border-[#404040] rounded-[5px] text-[#7e7e7e] flex items-center pl-[10px] pr-[17px] justify-between">{p.v}<Chevron s={15} /></div>;
    default:
      return null;
  }
}

function PropRow({ p }: { p: Prop }) {
  if (p.kind === "head")
    return (
      <div className="h-[40.500px] shrink-0 border-b-2 border-[#1a1a1a] bg-[#2f2f2f] flex items-center font-bold text-[#d0d0d0]">
        <Arrow open />
        {p.t}
      </div>
    );
  if (p.kind === "adv")
    return (
      <div className="h-[40.500px] shrink-0 border-b-2 border-[#1a1a1a] flex items-center">
        <Arrow />
        {p.t}
      </div>
    );
  return (
    <div className={`${p.kind === "class" ? "h-[86.500px]" : "h-[40.500px]"} shrink-0 border-b-2 border-[#1a1a1a] flex`}>
      <div className="w-[242px] border-r-2 border-[#1a1a1a] flex items-center whitespace-nowrap">
        {p.kind === "open" ? <Arrow /> : <span className="w-[33px] shrink-0" />}
        {p.t}
      </div>
      <div className="w-[328px] border-r border-[#1a1a1a] flex items-center pl-[18px] whitespace-nowrap">
        <Value p={p} />
      </div>
    </div>
  );
}

function Details() {
  return (
    <div className="ml-[8px] w-[628px] h-full flex flex-col">
      <div className="h-[44px] pt-[6px]">
        <div className="w-[240px] h-[37px] rounded-t-[5px] bg-[#242424] flex items-center pl-[8px] pb-[3px] text-[20px] text-[#c4c4c4]">
          <Pencil s={23} />
          <span className="ml-[10px]">Details</span>
          <Close className="ml-auto mr-[21px]" />
        </div>
      </div>
      <div className="w-[626px] h-[57px] pb-[1px] bg-[#242424] flex items-center pl-[12px]">
        <div className="w-[529px] h-[32px] rounded-full bg-[#0f0f0f] border-2 border-[#333] flex items-center pl-[6px] text-[20px] text-[#5a5a5a]">
          <svg width="23" height="22" viewBox="0 0 23 22" fill="none" stroke="#d0d0d0" strokeWidth="2.200"><circle cx="9.500" cy="9.500" r="8" /><path d="M15.500 15.500l6.500 6" /></svg>
          <span className="ml-[11px] -mt-[3px]">Search</span>
        </div>
        <svg className="ml-[20px]" width="22" height="21" viewBox="0 0 22 21"><rect width="22" height="21" rx="2" fill="#c0c0c0" /><path d="M3 5.500h16v3.200H3zM3 10.500h7v2.800H3zM12 10.500h7v2.800h-7zM3 15.200h7V18H3zM12 15.200h7V18h-7z" fill="#242424" /></svg>
        <Gear className="ml-[13px]" s={23} />
      </div>
      <div className="flex-1 min-h-0 flex overflow-hidden bg-[#1a1a1a]">
        <div className="w-[602.500px] pt-[1.500px] bg-[#242424] flex flex-col overflow-hidden text-[16px] text-[#c0c0c0]">
          {props.map((p, i) => (
            <PropRow key={i} p={p} />
          ))}
        </div>
        <div className="ml-[5.500px] mt-[3px] w-[12px] h-[1052px] rounded-full bg-[#575757]" />
      </div>
    </div>
  );
}

function StatusBar() {
  return (
    <div className="mt-[6px] h-[29px] bg-[#242424] overflow-hidden">
      <div className="h-[47px] flex items-center text-[20px] text-[#c0c0c0] whitespace-nowrap">
        <span className="ml-[3px] w-[114px]">Output Log</span>
        <Sep />
        <svg className="ml-[22px]" width="24" height="22" viewBox="0 0 24 22"><path d="M0 0h24v22H0z" fill="#c0c0c0" /><path d="M2.500 5h19v14.500h-19z" fill="#242424" /><path d="M6 9l4 4-4 4M12 17h6" stroke="#c0c0c0" strokeWidth="2" fill="none" /></svg>
        <span className="ml-[6px] w-[51px]">Cmd</span>
        <Chevron s={15} />
        <div className="ml-[20px] w-[398px] h-[31px] rounded-[5px] bg-[#0f0f0f] border-2 border-[#353535] pl-[9px] pt-[2px] flex items-center font-[Liberation_Mono] text-[18.300px] text-[#4f4f4f]">Enter Console Command</div>
        <Sep className="ml-[13px]" />
        <Sep className="ml-auto" />
        <svg className="ml-[18px]" width="25" height="24" viewBox="0 0 25 24"><path d="M0 0h16l4 4v9l-9 9H0z" fill="#9a9a9a" /><path d="M4 0h10v7H4z" fill="#ddd" /><path d="M11 19l4 4 9-10" stroke="#c0c0c0" strokeWidth="2.600" fill="none" /></svg>
        <span className="ml-[8px] w-[93px]">All Saved</span>
        <span className="w-[2px] h-[26px] bg-[#1a1a1a]" />
        <svg className="ml-[12px]" width="21" height="24" viewBox="0 0 21 24" fill="none" stroke="#e8e8e8" strokeWidth="2.200"><path d="M4 5v15M17 5c0 8-5 8-13 9" /><circle cx="4" cy="4" r="3" fill="#e8e8e8" /><circle cx="17" cy="4" r="3" fill="#e8e8e8" /><circle cx="4" cy="21" r="2.500" fill="#e8e8e8" /></svg>
        <span className="ml-[9px] w-[156px]">Revision Control</span>
        <Chevron s={13} />
      </div>
    </div>
  );
}

export default function App() {
  return (
    <div className="w-[3589px] h-[2069px] overflow-hidden flex flex-col bg-[#151515] font-[Roboto,sans-serif]">
      <TitleBar />
      <Toolbar />
      <div className="h-[1884px] flex">
        <LeftStrip />
        <div className="w-[2920px] flex flex-col">
          <PanelTabs />
          <Graph />
          <CompilerResults />
        </div>
        <Details />
      </div>
      <StatusBar />
    </div>
  );
}
